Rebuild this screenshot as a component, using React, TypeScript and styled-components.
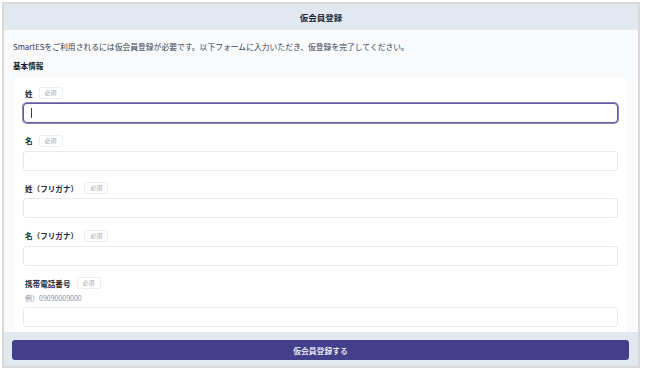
import * as React from 'react'
import styled, { createGlobalStyle } from 'styled-components'

const GlobalStyle = createGlobalStyle`
  html, body {
    margin: 0;
    padding: 0;
    background: #ffffff;
  }
  body {
    font-family: 'Noto Sans CJK JP', 'Noto Sans', sans-serif;
    color: #1f2937;
  }
  * {
    box-sizing: border-box;
  }
`

const Page = styled.div`
  width: 645px;
  height: 370px;
  padding: 2px 5px 2px 2px;
`

const Frame = styled.div`
  height: 366px;
  border: 2px solid #d9d9db;
  display: flex;
  flex-direction: column;
  overflow: hidden;
  background: #f8fafc;
`

const Header = styled.header`
  flex: 0 0 26px;
  background: #e2e8f0;
  display: flex;
  align-items: center;
  justify-content: center;
  font-size: 8.5px;
  font-weight: 700;
  color: #1f2937;
`

const Body = styled.main`
  flex: 1;
  min-height: 0;
  overflow: hidden;
  padding: 11px 12px 0 9px;
`

const Lead = styled.p`
  margin: 0;
  font-size: 7.8px;
  line-height: 12px;
  color: #374151;
`

const SectionTitle = styled.h2`
  margin: 7px 0 0;
  font-size: 7.6px;
  line-height: 12px;
  font-weight: 700;
  color: #111827;
`

const Card = styled.section`
  margin: 5px 0 0 2px;
  background: #ffffff;
  border-radius: 4px;
  padding: 9px 8px 12px;
`

const Field = styled.div`
  & + & {
    margin-top: 10.5px;
  }
`

const LabelRow = styled.div`
  height: 14px;
  display: flex;
  align-items: center;
  padding-left: 2px;
`

const Label = styled.label`
  font-size: 7.6px;
  font-weight: 700;
  color: #1f2937;
`

const Badge = styled.span`
  margin-left: 6px;
  height: 12px;
  padding: 0 5px;
  border: 1px solid #eceef1;
  border-radius: 2px;
  font-size: 6px;
  line-height: 10px;
  color: #a0a6b0;
`

const Hint = styled.div`
  margin-top: 2px;
  padding-left: 2px;
  font-size: 7px;
  line-height: 12px;
  color: #8a909b;
`

const InputWrap = styled.div`
  position: relative;
  margin-top: 3px;
`

const Input = styled.input<{ $focused?: boolean }>`
  display: block;
  width: 100%;
  height: 20px;
  margin: 0;
  padding: 0 8px;
  background: #ffffff;
  border: 1px solid ${(p) => (p.$focused ? '#625c9c' : '#e8eaee')};
  border-radius: ${(p) => (p.$focused ? '4px' : '3px')};
  box-shadow: ${(p) => (p.$focused ? '0 0 0 1px #8c86b8' : 'none')};
  outline: none;
  font-family: inherit;
  font-size: 8px;
`

const Caret = styled.span`
  position: absolute;
  left: 8px;
  top: 5px;
  width: 1px;
  height: 10px;
  background: #374151;
`

const Footer = styled.footer`
  flex: 0 0 auto;
  background: #e2e8f0;
  padding: 8px 9px 6px 8px;
`

const SubmitButton = styled.button`
  display: block;
  width: 100%;
  height: 20px;
  border: none;
  border-radius: 3px;
  background: #433f8a;
  color: #ffffff;
  font-family: inherit;
  font-size: 7.8px;
  font-weight: 500;
  cursor: pointer;
`

type FieldDef = {
  label: string
  hint?: string
  focused?: boolean
}

const fields: FieldDef[] = [
  { label: '姓', focused: true },
  { label: '名' },
  { label: '姓（フリガナ）' },
  { label: '名（フリガナ）' },
  { label: '携帯電話番号', hint: '例）09090009000' },
]

const App: React.FC = () => {
  return (
    <>
      <GlobalStyle />
      <Page>
        <Frame>
          <Header>仮会員登録</Header>
          <Body>
            <Lead>
              SmartESをご利用されるには仮会員登録が必要です。以下フォームに入力いただき、仮登録を完了してください。
            </Lead>
            <SectionTitle>基本情報</SectionTitle>
            <Card>
              {fields.map((f) => (
                <Field key={f.label}>
                  <LabelRow>
                    <Label>{f.label}</Label>
                    <Badge>必須</Badge>
                  </LabelRow>
                  {f.hint && <Hint>{f.hint}</Hint>}
                  <InputWrap>
                    <Input type="text" $focused={f.focused} readOnly />
                    {f.focused && <Caret />}
                  </InputWrap>
                </Field>
              ))}
            </Card>
          </Body>
          <Footer>
            <SubmitButton type="button">仮会員登録する</SubmitButton>
          </Footer>
        </Frame>
      </Page>
    </>
  )
}

export default App
